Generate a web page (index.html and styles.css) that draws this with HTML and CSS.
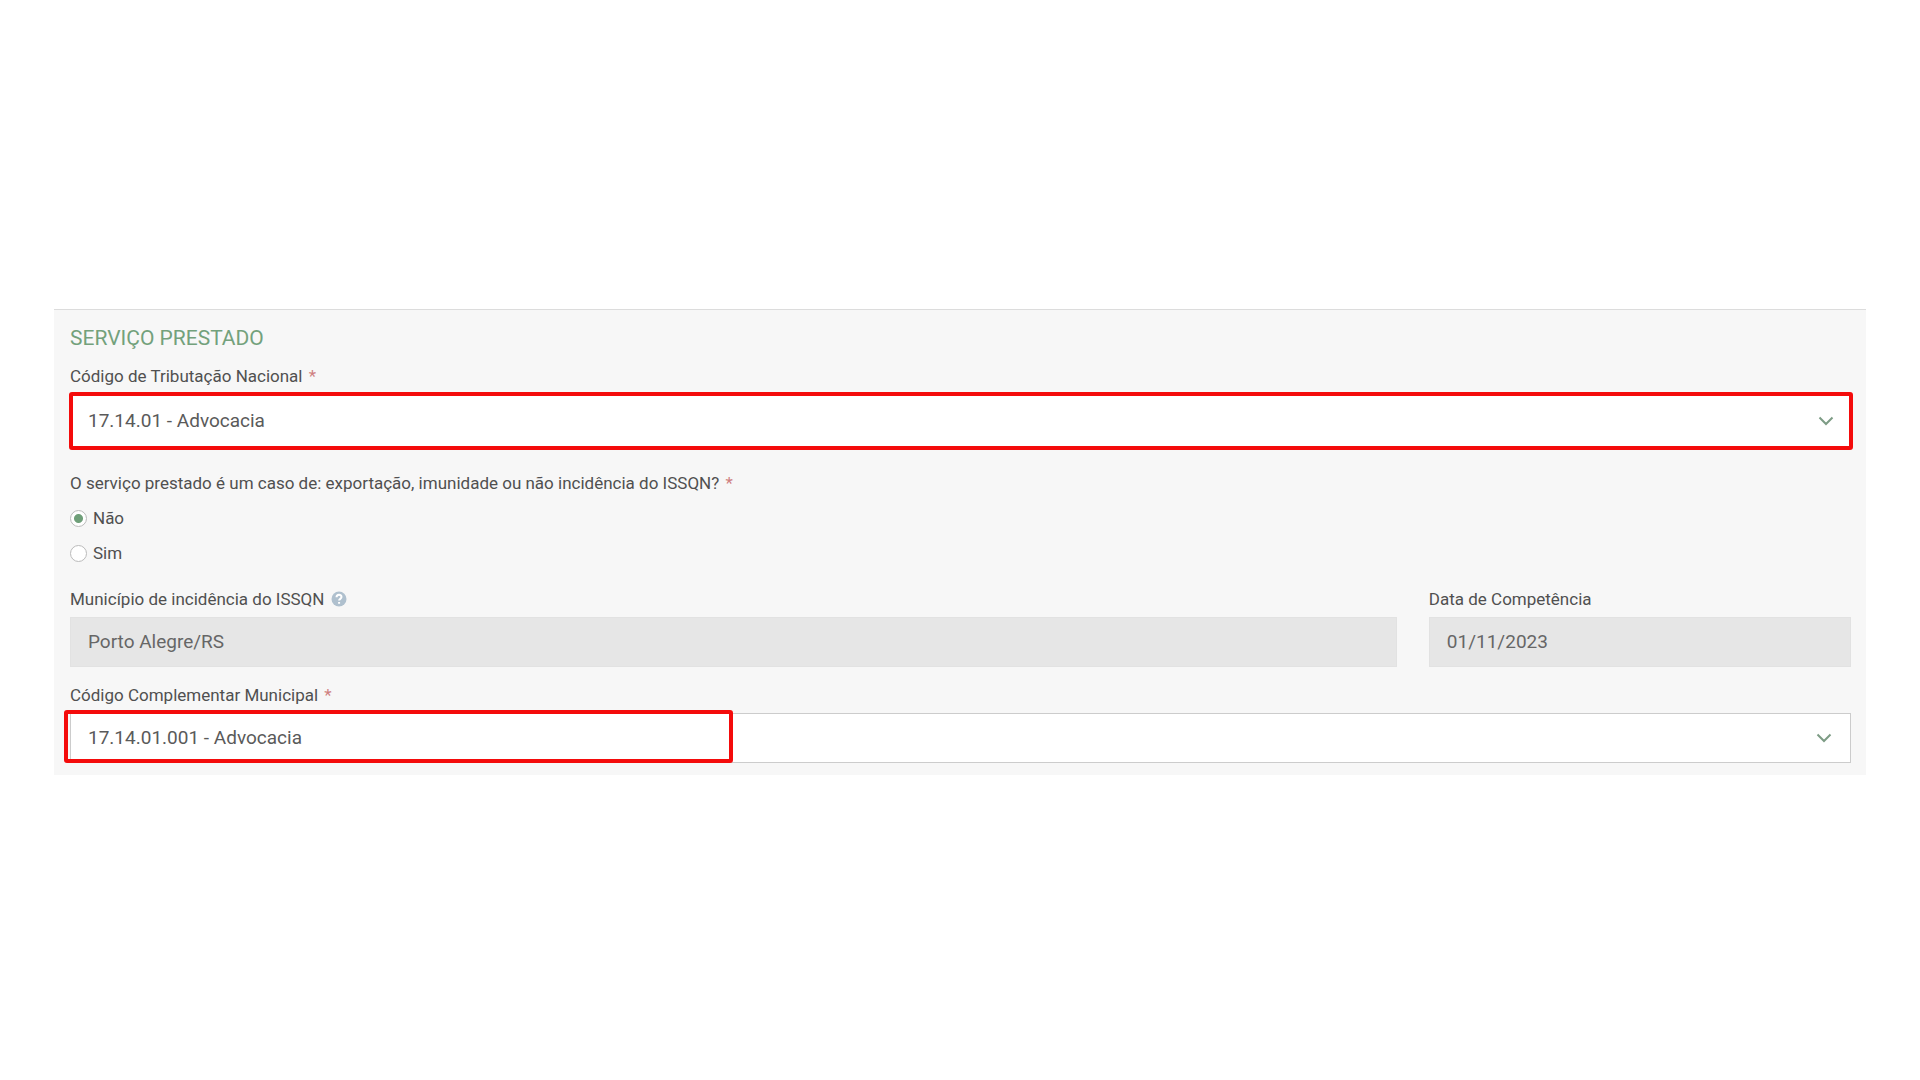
FILE: index.html
```html
<!DOCTYPE html>
<html lang="pt-BR">
<head>
    <meta charset="UTF-8">
    <meta name="viewport" content="width=device-width, initial-scale=1.0">
    <title>Serviço Prestado</title>
    <link rel="stylesheet" href="styles.css">
</head>
<body>
    <form class="panel">
        <h1>SERVIÇO PRESTADO</h1>

        <div class="field">
            <label for="codigoNacional">Código de Tributação Nacional <span class="required">*</span></label>
            <div class="select-box marked">
                <select id="codigoNacional">
                    <option>17.14.01 - Advocacia</option>
                </select>
                <svg class="chevron" viewBox="0 0 16 10"><path d="M1.5 1.5L8 8L14.5 1.5"/></svg>
            </div>
        </div>

        <fieldset>
            <legend>O serviço prestado é um caso de: exportação, imunidade ou não incidência do ISSQN? <span class="required">*</span></legend>
            <label class="option"><input type="radio" name="caso" checked>Não</label>
            <label class="option"><input type="radio" name="caso">Sim</label>
        </fieldset>

        <div class="row">
            <div class="field">
                <label for="municipio">Município de incidência do ISSQN
                    <svg class="help" viewBox="0 0 16 16"><circle cx="8" cy="8" r="7.5"/><path d="M5.5 6.3C5.6 3 10.5 3.1 10.5 6C10.5 7.8 8.1 7.9 8.1 9.6M8.1 11V12.8"/></svg>
                </label>
                <input type="text" id="municipio" value="Porto Alegre/RS" disabled>
            </div>
            <div class="field">
                <label for="competencia">Data de Competência</label>
                <input type="text" id="competencia" value="01/11/2023" disabled>
            </div>
        </div>

        <div class="field">
            <label for="codigoMunicipal">Código Complementar Municipal <span class="required">*</span></label>
            <div class="select-box">
                <select id="codigoMunicipal">
                    <option>17.14.01.001 - Advocacia</option>
                </select>
                <svg class="chevron" viewBox="0 0 16 10"><path d="M1.5 1.5L8 8L14.5 1.5"/></svg>
                <div class="highlight"></div>
            </div>
        </div>
    </form>
</body>
</html>
```
FILE: styles.css
```css
* {
    box-sizing: border-box;
}
body {
    margin: 0;
    padding: 309px 54px 0;
    background-color: #fff;
    color: #505050;
    font-family: Roboto, Arial, sans-serif;
    font-size: 17px;
    line-height: 24px;
}
.panel {
    padding: 14px 15px 12px 16px;
    background-color: #f7f7f7;
    border-top: 1px solid #dcdcdc;
}
h1 {
    margin: 0 0 12px;
    color: #73a17c;
    font-size: 21px;
    font-weight: 400;
    line-height: 28px;
}
.field {
    display: flex;
    flex-direction: column;
    gap: 6px;
}
.required {
    margin-left: 2px;
    color: #cf8080;
}

/* selects */
.select-box {
    position: relative;
}
select {
    display: block;
    width: 100%;
    height: 50px;
    padding: 0 48px 2px 17px;
    appearance: none;
    background-color: #fff;
    border: 1px solid #ccc;
    border-radius: 0;
    color: #5a5a5a;
    font-family: inherit;
    font-size: 19px;
}
.chevron {
    position: absolute;
    top: 50%;
    right: 19px;
    width: 16px;
    height: 10px;
    margin-top: -5px;
    fill: none;
    stroke: #7d9c85;
    stroke-width: 2;
    pointer-events: none;
}
.marked {
    margin: -2px -2px 0 -1px;
}
.marked select {
    height: 58px;
    padding-left: 15px;
    border: 4px solid #f40b0b;
    border-radius: 3px;
}
.highlight {
    position: absolute;
    top: -3px;
    bottom: 0;
    left: -6px;
    width: 669px;
    border: 4px solid #f40b0b;
    border-radius: 3px;
    pointer-events: none;
}

/* radio buttons */
fieldset {
    margin: 21px 0 0;
    padding: 0;
    border: 0;
}
legend {
    padding: 0;
}
.option {
    display: flex;
    align-items: center;
    gap: 6px;
    margin-top: 11px;
}
.option input {
    width: 17px;
    height: 17px;
    margin: 0;
    appearance: none;
    background-color: #fff;
    border: 1px solid #bbb;
    border-radius: 50%;
}
.option input:checked {
    background-image: radial-gradient(circle, #6f9f79 4px, #fff 5px);
}

/* read-only values */
.row {
    display: grid;
    grid-template-columns: 22fr 7fr;
    gap: 32px;
    margin: 22px 0 16px;
}
.help {
    width: 16px;
    height: 16px;
    margin-left: 2px;
    vertical-align: -2px;
}
.help circle {
    fill: #afc0ce;
}
.help path {
    fill: none;
    stroke: #fff;
    stroke-width: 2;
}
input[type="text"] {
    width: 100%;
    height: 50px;
    padding: 0 17px 2px;
    background-color: #e6e6e6;
    border: 1px solid #e2e2e2;
    color: #666;
    font-family: inherit;
    font-size: 19px;
}
```
